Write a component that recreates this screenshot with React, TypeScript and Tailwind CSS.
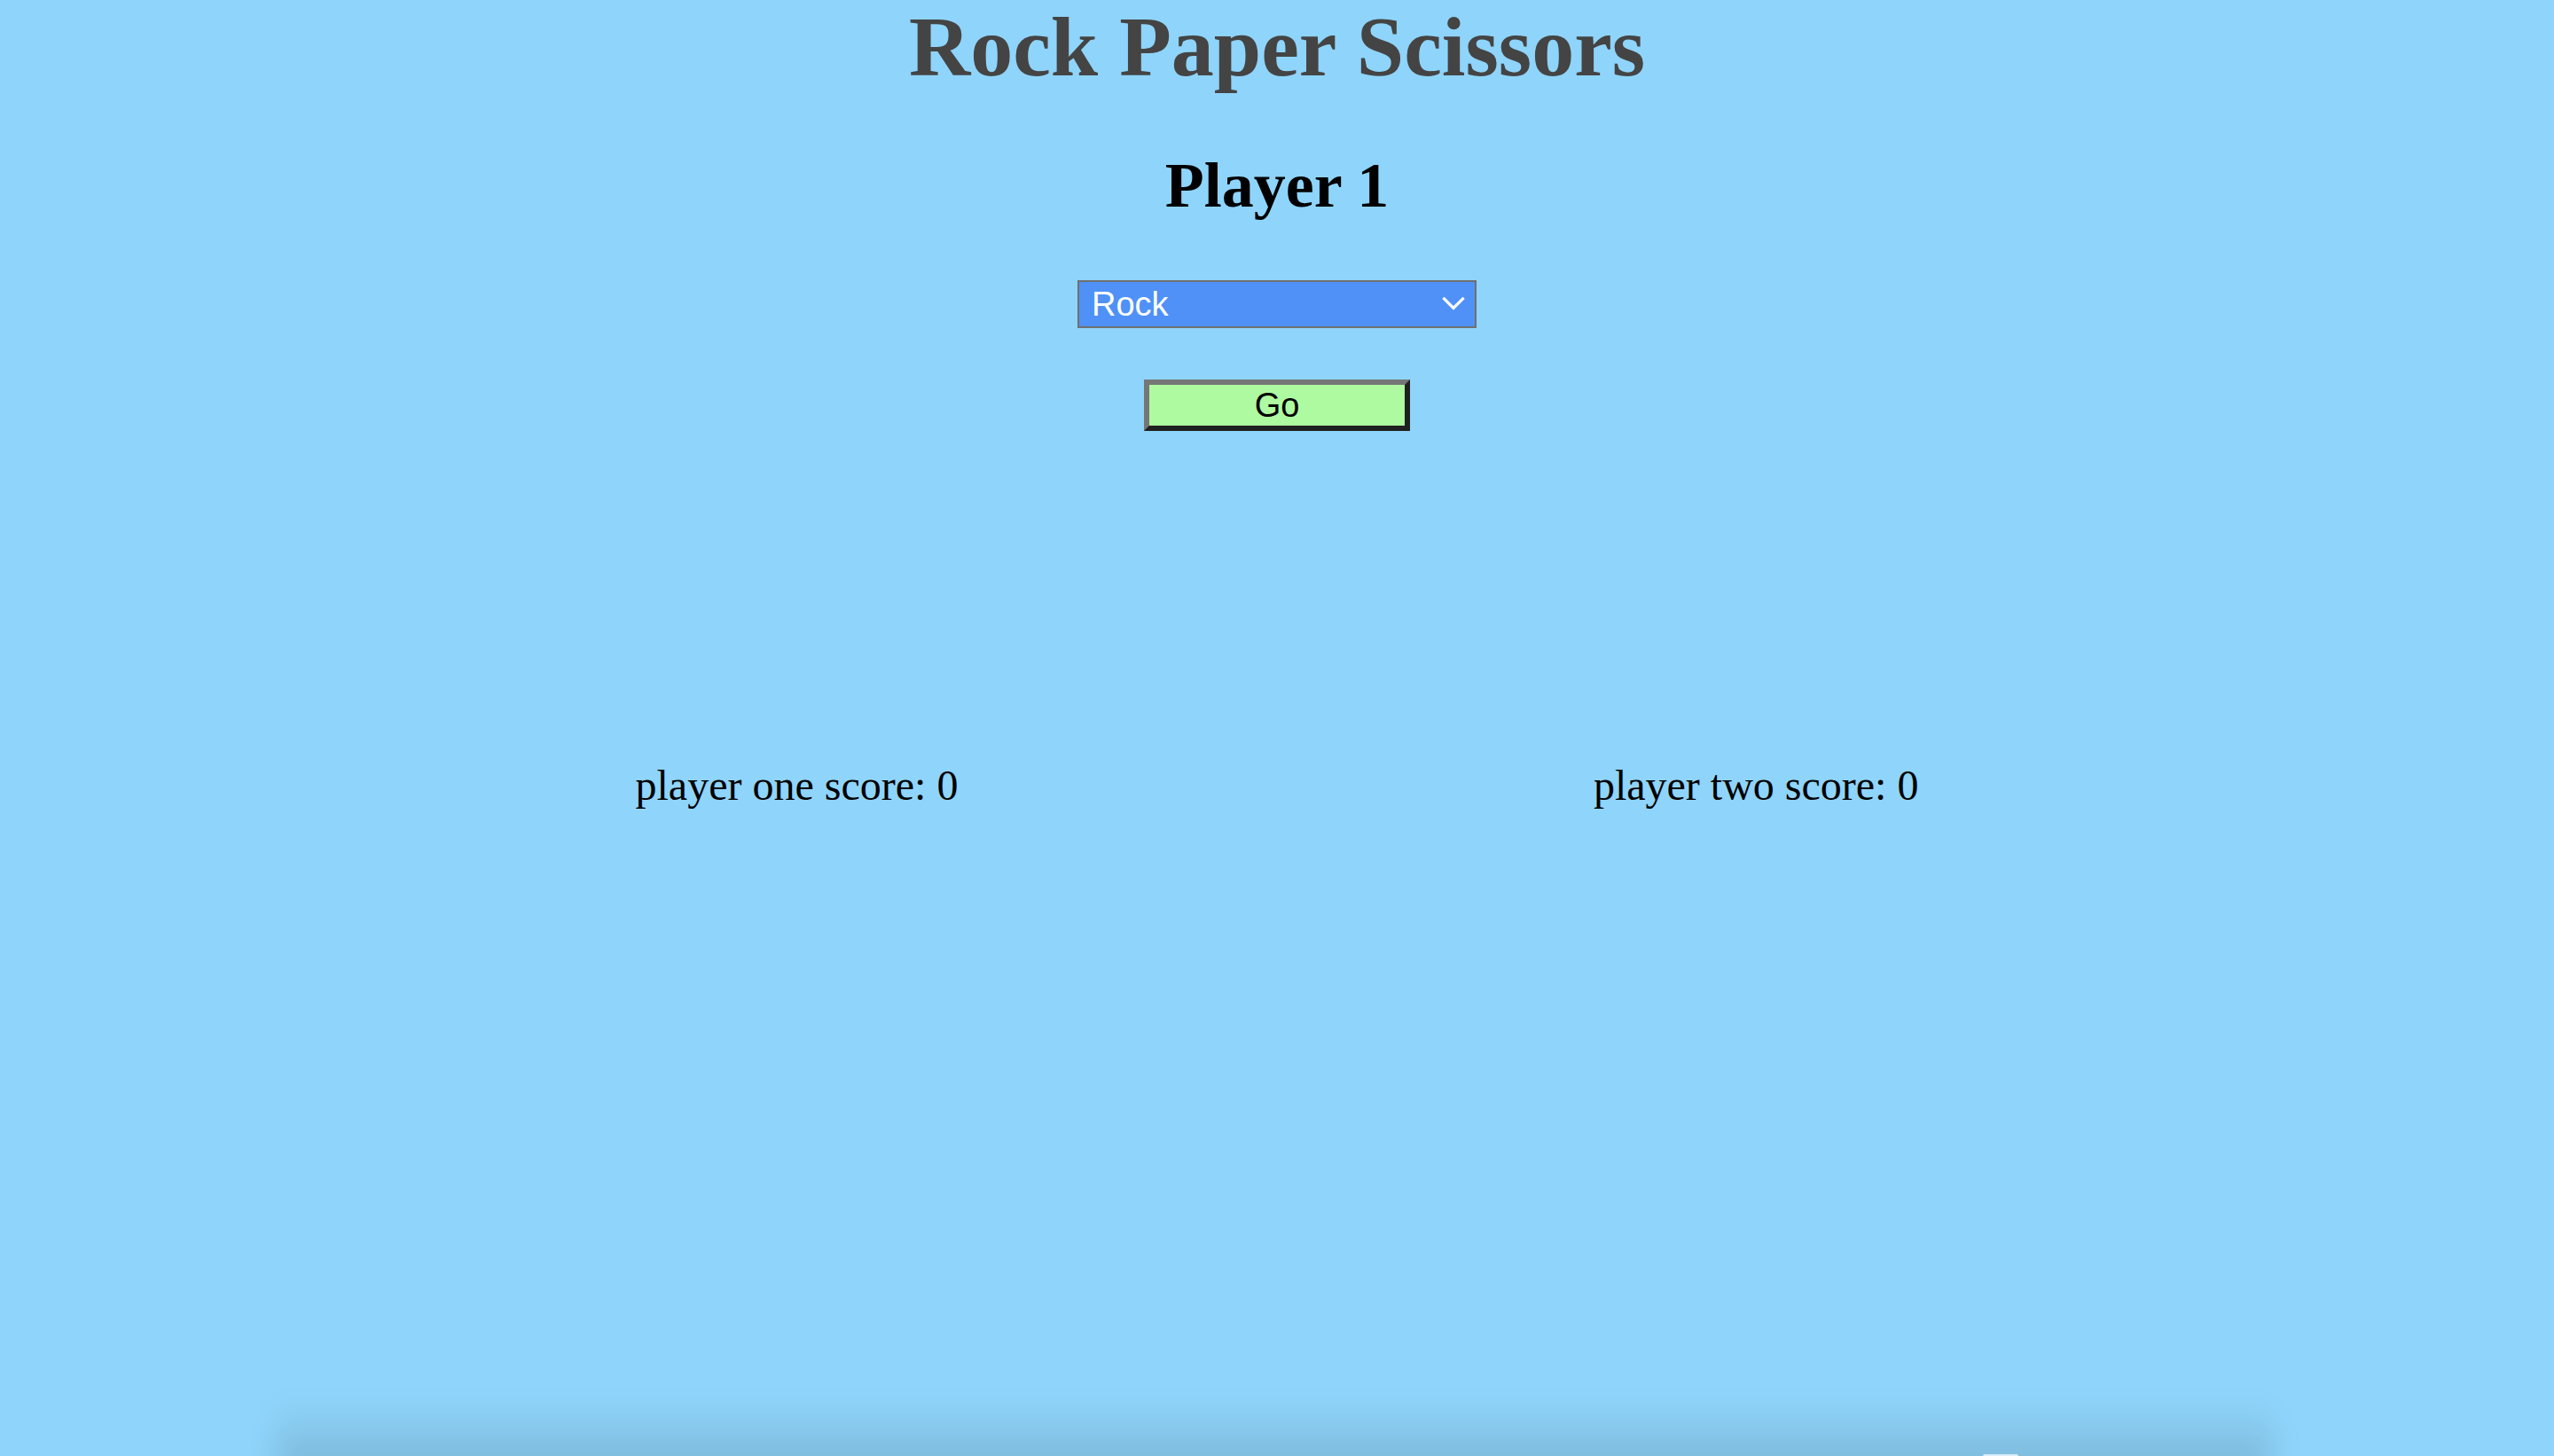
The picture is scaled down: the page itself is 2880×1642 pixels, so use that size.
import React, { useState } from 'react';

const choices = ['Rock', 'Paper', 'Scissors'];

export default function App() {
    const [choice, setChoice] = useState('Rock');
    const [scores] = useState({ one: 0, two: 0 });

    return (
        <div className="relative min-h-screen w-full overflow-hidden bg-[#8fd4fa] font-['Liberation_Serif',serif] text-black">
            <div className="flex flex-col items-center">
                <h1 className="m-0 text-[96px] font-bold leading-[106px] text-[#444444]">Rock Paper Scissors</h1>
                <h2 className="mt-[63px] text-[72px] font-bold leading-[80px]">Player 1</h2>

                <div className="relative mt-[67px] w-[450px]">
                    <select
                        value={choice}
                        onChange={(e) => setChoice(e.target.value)}
                        className="h-[54px] w-full appearance-none rounded-none border-2 border-[#707070] bg-[#4f91f6] pl-[14px] font-['Liberation_Sans',Arial,sans-serif] text-[38px] leading-[50px] text-white outline-none"
                    >
                        {choices.map((c) => (
                            <option key={c} value={c}>{c}</option>
                        ))}
                    </select>
                    <svg
                        className="pointer-events-none absolute right-[13px] top-[18px]"
                        width="26"
                        height="17"
                        viewBox="0 0 26 17"
                        fill="none"
                        stroke="white"
                        strokeWidth="3.2"
                        strokeLinecap="square"
                    >
                        <path d="M2.5 3 L13 13.5 L23.5 3" />
                    </svg>
                </div>

                <button className="mt-[58px] h-[58px] w-[300px] border-[6px] border-t-[#767676] border-l-[#767676] border-b-[#202020] border-r-[#202020] bg-[#aefaa0] font-['Liberation_Sans',Arial,sans-serif] text-[38px] leading-[44px] text-black">
                    Go
                </button>
            </div>

            {/* scores */}
            <div className="mt-[372px] flex justify-evenly text-[48px] leading-[55px]">
                <div>player one score: {scores.one}</div>
                <div>player two score: {scores.two}</div>
            </div>

            {/* dock shadow at the bottom edge */}
            <div className="pointer-events-none absolute bottom-[-20px] left-[312px] right-[318px] h-[80px] bg-gradient-to-b from-transparent to-black/15 blur-lg" />
            <div className="pointer-events-none absolute bottom-0 left-[2236px] h-[2px] w-[40px] rounded-t-full bg-white/70" />
        </div>
    );
}
